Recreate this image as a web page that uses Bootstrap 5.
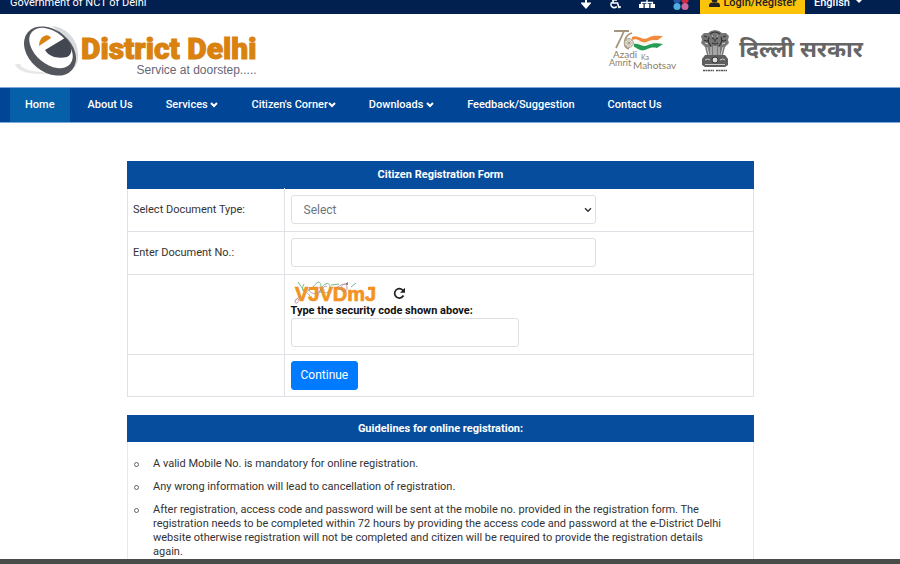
<!DOCTYPE html>
<html lang="en">
<head>
<meta charset="utf-8">
<meta name="viewport" content="width=device-width, initial-scale=1">
<title>Citizen Registration Form - e-District Delhi</title>
<link href="https://cdn.jsdelivr.net/npm/bootstrap@5.3.0/dist/css/bootstrap.min.css" rel="stylesheet">
<style>
  body { font-family: Roboto, "Liberation Sans", sans-serif; font-size: 11px; line-height: 14px; color: #333; background: #fff; }
  .topbar { background: #01204f; color: #fff; height: 14px; line-height: 22px; padding: 0 37px 0 10px; }
  .topbar svg { display: block; }
  .topbar a { color: #fff; text-decoration: none; }
  .tool-links { gap: 18px; margin-right: 11px; }
  .login-link { background: #fdc30a; padding: 0 9px; gap: 3px; }
  .topbar .login-link { color: #222; }
  .lang-btn { color: #fff; background: none; border: 0; padding: 0 0 0 9px; font-size: 11px; line-height: 22px; }
  .lang-btn::after { margin-left: 5px; border-width: 4px; border-bottom: 0; }
  .masthead { height: 73px; padding: 0 37px 0 14px; }
  .brand-text { padding-top: 8px; }
  .brand-name { font-weight: 900; font-size: 30px; line-height: 30px; color: #d9820f; -webkit-text-stroke: 1px #d9820f; }
  .brand-tag { font-family: "Liberation Sans", sans-serif; font-size: 12px; line-height: 12px; color: #667; }
  .gov-name { font-family: "Noto Sans Devanagari", "Lohit Devanagari", FreeSans, "Noto Sans", sans-serif; font-weight: 700; font-size: 23px; line-height: 36px; color: #666; }
  .azadi-logo { margin-right: 20px; }
  .mainnav { background: #004596; padding: 0 10px; border: solid #7fa8d8; border-width: 1px 0; }
  .mainnav .nav { gap: 3px; }
  .mainnav .nav-link { color: #fff; font-weight: 500; line-height: 14px; padding: 10px 15px; }
  .mainnav .nav-link.active { background: #0560a9; }
  .page-area { padding: 38px 146px 0 127px; min-height: 0; }
  .form-grid { border-color: #dee2e6; margin-bottom: 18px; color: #333; }
  .form-grid td { padding: 6px 6px 7px; }
  .form-grid tr:last-child td { padding-bottom: 6px; }
  .form-grid .label-col { width: 25%; padding-left: 5px; }
  .form-grid thead, .form-grid thead tr { border-color: #074d9d; }
  .form-grid th, .panel-title { background: #074d9d; color: #fff; font-weight: 700; font-size: 11px; line-height: 14px; padding: 6px; text-align: center; }
  .panel-title { line-height: 15px; }
  .form-grid th { border-color: #074d9d; }
  .field { height: 29px; font-size: 12px; line-height: 16px; padding: 5px 12px; color: #6c757d; border-color: #dcdfe4; border-radius: 3px; }
  .doc-field { width: 67%; }
  .form-select.field { background-image: url("data:image/svg+xml,%3Csvg xmlns='http://www.w3.org/2000/svg' viewBox='0 0 8 6'%3E%3Cpath d='M1 1.2l3 3 3-3' fill='none' stroke='%23333' stroke-width='1.4'/%3E%3C/svg%3E"); background-size: 8px 6px; background-position: right 3px center; }
  .code-label { color: #111; font-weight: 700; line-height: 14px; }
  .btn-continue { background: #007bff; border-color: #007bff; color: #fff; font-size: 12px; line-height: 17px; padding: 5px 9px; border-radius: 3px; }
  .panel { border: 1px solid #e6e8eb; border-top: 0; }
  .panel-title { margin: 0 -1px; }
  .guide-list { list-style: none; padding: 15px 28px 0 6px; margin: 0; }
  .guide-list li { display: flex; gap: 14px; margin-bottom: 9px; }
  .guide-list li::before { content: ""; flex: none; width: 5px; height: 5px; margin-top: 5px; border: 1px solid #666; border-radius: 50%; }
  .footer-strip { height: 5px; background: #4a4c4a; flex: none; }
</style>
<script src="https://cdn.jsdelivr.net/npm/bootstrap@5.3.0/dist/js/bootstrap.bundle.min.js"></script>
</head>
<body class="d-flex flex-column vh-100 overflow-hidden">

<header class="flex-shrink-0">
  <div class="topbar d-flex justify-content-between align-items-end overflow-hidden">
    <a href="#">Government of NCT of Delhi</a>
    <div class="d-flex align-items-end">
      <div class="tool-links d-flex align-items-center">
        <a href="#content" aria-label="Skip to content"><svg width="10" height="22" viewBox="0 0 10 22"><path d="M5 4v12M1.500 11.500L5 15.500l3.500-4z" fill="#fff" stroke="#fff" stroke-width="2"/></svg></a>
        <a href="#" aria-label="Accessibility"><svg width="12" height="22" viewBox="0 0 12 22"><path d="M4 4v7h4.500l1.500 4.500 2-.8M4 8h4M2.800 10.200a3.200 3.200 0 1 0 5 4.300" fill="none" stroke="#fff" stroke-width="1.600"/></svg></a>
        <a href="#" aria-label="Sitemap"><svg width="16" height="22" viewBox="0 0 16 22"><path d="M8 5v8M2.500 13V10.500h11V13" fill="none" stroke="#fff" stroke-width="1.300"/><path d="M0 12h4.500v4H0zM5.750 12h4.500v4h-4.500zM11.500 12H16v4h-4.500zM5.500 4h5v4h-5z" fill="#fff"/></svg></a>
        <a href="#" aria-label="Colour theme"><svg width="16" height="22" viewBox="0 0 16 22"><circle cx="4" cy="7.500" r="3.700" fill="#2457a8"/><circle cx="12" cy="7.500" r="3.700" fill="#d8283c"/><circle cx="4" cy="14.500" r="3.500" fill="#4fb0e0"/><circle cx="12" cy="14.500" r="3.500" fill="#d0679c"/></svg></a>
      </div>
      <a href="#" class="login-link d-flex fw-medium"><svg width="11" height="22" viewBox="0 0 11 22"><circle cx="5.500" cy="7.500" r="3" fill="#222"/><path d="M0 15v-1.500c0-2 1.500-3 3-3h5c1.500 0 3 1 3 3V15z" fill="#222"/></svg>Login/Register</a>
      <button type="button" class="lang-btn fw-medium dropdown-toggle">English</button>
    </div>
  </div>

  <div class="masthead d-flex justify-content-between align-items-center">
    <a href="#" class="d-flex align-items-center text-decoration-none">
      <svg width="67" height="54" viewBox="0 0 67 54" aria-hidden="true">
        <path d="M1 40c2 8 18 12 38 9C20 48 8 46 6 40z" fill="#e6e7e9"/>
        <path d="M38 2C52 3 66 16 64 35c-1 9-8 14-18 15C60 42 58 17 38 2z" fill="#d8dadd"/>
        <ellipse cx="36" cy="27" rx="21" ry="29" transform="rotate(-50 36 27)" fill="#53565d"/>
        <ellipse cx="37" cy="24" rx="16" ry="25" transform="rotate(-50 37 24)" fill="#fff"/>
        <path d="M31 26L51 14C58 20 60 30 53 33 44 35 35 33 31 26z" fill="#424751"/>
        <path d="M25 22C25 12 34 8 37 14z" fill="#d9820f"/>
      </svg>
      <span class="brand-text d-flex flex-column align-items-end">
        <span class="brand-name">District Delhi</span>
        <span class="brand-tag">Service at doorstep.....</span>
      </span>
    </a>
    <div class="d-flex align-items-center">
      <svg width="70" height="44" viewBox="0 0 70 44" class="azadi-logo" role="img" aria-label="Azadi Ka Amrit Mahotsav">
        <path d="M5 2h15M15 2C13 7 10 13 7 19M23 4c-8 2-10 14-3 16" fill="none" stroke="#a2947d" stroke-width="1.800"/>
        <path d="M23 8c6-3 10 4 16 1 5-3 8-2 15-2l-5 4c-10-1-12 5-18 1-3-2-5-2-8-1z" fill="#f08a3c"/>
        <path d="M26 12c5-1 7 4 12 1 4-2 6-2 12-2l-4 3c-8 0-11 4-16 2z" fill="#f7f4ec"/>
        <path d="M25 15c5-1 8 4 14 1 5-2 8-2 15-1l-6 4c-9-2-11 4-17 2-3-1-4-3-6-3z" fill="#269b55"/>
        <circle cx="20" cy="14" r="4.500" fill="#ece6da" stroke="#b1a690"/>
        <path d="M20 10v8M16 14h8M17 11l6 6M17 17l6-6" stroke="#9a917f" stroke-width=".6"/>
        <g font-family="Lato, sans-serif" fill="#8f8068"><text x="4" y="29" font-size="10">Azadi</text><text x="32" y="31" font-size="7">Ka</text><text x="0" y="37" font-size="9">Amrit</text><text x="24" y="40" font-size="10">Mahotsav</text></g>
      </svg>
      <svg width="32" height="44" viewBox="0 0 32 44" class="me-2" role="img" aria-label="State emblem">
        <path d="M9 4l3-2 4-1 4 1 3 2 4 0 3 3-1 4 1 3-4 4-2 8H8l-2-8-4-4 1-3-1-4 3-3z" fill="#777"/>
        <path d="M11 5q5-4 10 0M10 8q-2 5 2 9M22 8q2 5-2 9M13 9l2 1M19 9l-2 1M16 10v3M13 14q3 2 6 0M5 7l3 1M27 7l-3 1M5 11q3 2 4 0M27 11q-3 2-4 0" fill="none" stroke="#333" stroke-width="1.200"/>
        <path d="M12 18v9M15 17v10M17 17v10M20 18v9M8 18l2 8M24 18l-2 8M13 7h1M18 7h1M6 14l3 1M26 14l-3 1" stroke="#d5d5d5"/>
        <path d="M6 26h20l3 4v6l-3 2H6l-3-2v-6z" fill="#5f5f5f"/>
        <circle cx="16" cy="31" r="3" fill="#ddd" stroke="#333"/>
        <path d="M6 31q3-2 5 0M21 31q3-2 5 0M6 35.500h20" fill="none" stroke="#ccc"/>
        <path d="M4 41.500h11M17 41.500h11" stroke="#555" stroke-width="1.500" stroke-dasharray="2 .5"/>
      </svg>
      <span class="gov-name" lang="hi">दिल्ली सरकार</span>
    </div>
  </div>

  <nav class="mainnav" aria-label="Main">
    <ul class="nav flex-nowrap text-nowrap">
      <li><a class="nav-link active" href="#">Home</a></li>
      <li><a class="nav-link" href="#">About Us</a></li>
      <li><a class="nav-link" href="#">Services <svg width="8" height="6" viewBox="0 0 8 6"><path d="M1 1l3 3 3-3" fill="none" stroke="#fff" stroke-width="2"/></svg></a></li>
      <li><a class="nav-link" href="#">Citizen's Corner<svg width="8" height="6" viewBox="0 0 8 6"><path d="M1 1l3 3 3-3" fill="none" stroke="#fff" stroke-width="2"/></svg></a></li>
      <li><a class="nav-link" href="#">Downloads <svg width="8" height="6" viewBox="0 0 8 6"><path d="M1 1l3 3 3-3" fill="none" stroke="#fff" stroke-width="2"/></svg></a></li>
      <li><a class="nav-link" href="#">Feedback/Suggestion</a></li>
      <li><a class="nav-link" href="#">Contact Us</a></li>
    </ul>
  </nav>
</header>

<main id="content" class="page-area flex-grow-1 overflow-hidden">
  <form>
    <table class="table table-bordered align-middle form-grid">
      <thead><tr><th colspan="2">Citizen Registration Form</th></tr></thead>
      <tbody>
        <tr>
          <td class="label-col"><label for="docType">Select Document Type:</label></td>
          <td><select id="docType" class="form-select field doc-field"><option>Select</option></select></td>
        </tr>
        <tr>
          <td class="label-col"><label for="docNo">Enter Document No.:</label></td>
          <td><input id="docNo" type="text" class="form-control field doc-field"></td>
        </tr>
        <tr>
          <td class="label-col"></td>
          <td>
            <div class="d-flex align-items-center gap-2">
              <svg width="94" height="23" viewBox="0 0 94 23" role="img" aria-label="Security code">
                <path d="M7 1c4 7 8 9 12 14M13 3c-5 9 3 10 9 3 6-8 9-6 8 6M27 15C31 1 40-1 39 8c-1 5-8 5-6 0M40 4l8-1M60 6l5-4" fill="none" stroke="#74b98a"/>
                <text x="4" y="20" font-family="Liberation Sans, sans-serif" font-weight="700" font-size="20" fill="#f39323" stroke="#f39323" stroke-width=".7">VJVDmJ</text>
                <path d="M18 7.500h9M77 7.500h7" stroke="#f39323" stroke-width="3"/>
                <path d="M4 20c2-5 6-1 2 2-3 1-3-3 4-7M16 6c3 7 8 8 12 5s6-8 8-5M44 8c6-5 11-7 12-2s-7 6-6 1 5-3 7-6" fill="none" stroke="#b58aa0" stroke-width=".8"/>
                <circle cx="56" cy="3" r="1" fill="#666"/>
              </svg>
              <button type="button" class="btn p-0 border-0 lh-1" aria-label="Refresh code"><svg width="13" height="13" viewBox="0 0 13 13"><path d="M10.500 8.500a4.700 4.700 0 1 1-.4-5" fill="none" stroke="#222" stroke-width="1.700"/><path d="M12 .8v5H7z" fill="#222"/></svg></button>
            </div>
            <label for="code" class="code-label d-block">Type the security code shown above:</label>
            <input id="code" type="text" class="form-control field w-50">
          </td>
        </tr>
        <tr>
          <td class="label-col"></td>
          <td><button type="button" class="btn btn-continue">Continue</button></td>
        </tr>
      </tbody>
    </table>
  </form>

  <section class="panel">
    <h2 class="panel-title">Guidelines for online registration:</h2>
    <ul class="guide-list">
      <li>A valid Mobile No. is mandatory for online registration.</li>
      <li>Any wrong information will lead to cancellation of registration.</li>
      <li>After registration, access code and password will be sent at the mobile no. provided in the registration form. The registration needs to be completed within 72 hours by providing the access code and password at the e-District Delhi website otherwise registration will not be completed and citizen will be required to provide the registration details again.</li>
    </ul>
  </section>
</main>

<footer class="footer-strip"></footer>
</body>
</html>
